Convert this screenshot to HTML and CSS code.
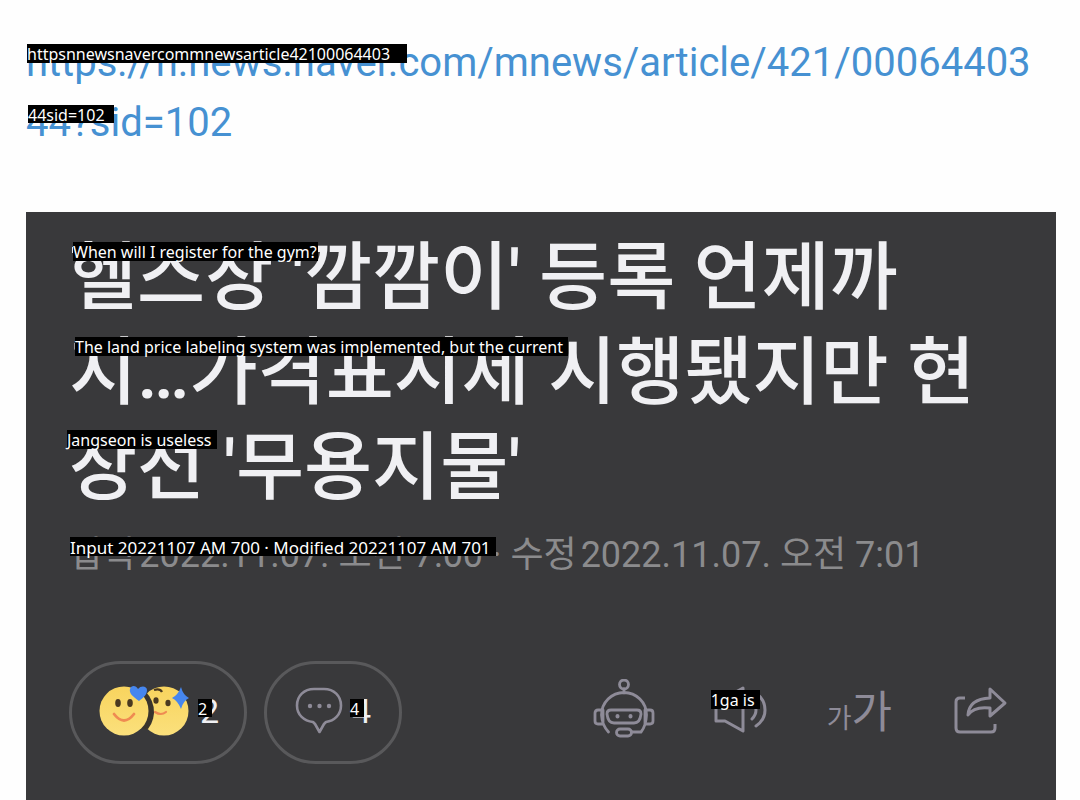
FILE: index.html
```html
<!DOCTYPE html>
<html lang="ko">
<head>
<meta charset="utf-8">
<title>헬스장 '깜깜이' 등록 언제까지</title>
<link rel="stylesheet" href="styles.css">
</head>
<body>
<p class="source">
  <a href="https://n.news.naver.com/mnews/article/421/0006440344?sid=102"><span class="line">https://n.news.naver.com/mnews/article/421/00064403<span class="tag tag-url">httpsnnewsnavercommnewsarticle42100064403</span></span><span class="line">44?sid=102<span class="tag tag-sid">44sid=102</span></span></a>
</p>
<main class="card">
  <h1 class="title">
    <span class="line">헬스장 '깜깜이' 등록 언제까<span class="tag tag-t1">When will I register for the gym?</span></span>
    <span class="line">지…가격표시제 시행됐지만 현<span class="tag tag-t2">The land price labeling system was implemented, but the current</span></span>
    <span class="line">장선 '무용지물'<span class="tag tag-t3">Jangseon is useless</span></span>
  </h1>
  <p class="meta line"><span class="label">입력</span>2022.11.07. 오전 7:00 · <span class="label">수정</span>2022.11.07. 오전 7:01<span class="tag tag-meta">Input 20221107 AM 700 · Modified 20221107 AM 701</span></p>
  <div class="actions">
    <button class="pill" type="button">
      <svg viewBox="0 0 92 52" width="92" height="52" aria-hidden="true">
        <defs><linearGradient id="skin" x1="0" y1="0" x2="0" y2="1"><stop offset="0" stop-color="#f8d45e"/><stop offset="1" stop-color="#fbe07c"/></linearGradient></defs>
        <circle cx="65" cy="26" r="24.5" fill="url(#skin)"/>
        <path d="M55 5q6-2 8 2" fill="none" stroke="#4a3920" stroke-width="2.2"/>
        <ellipse cx="57" cy="15.5" rx="2.6" ry="3.3" fill="#4a3920"/>
        <ellipse cx="69" cy="18" rx="2.6" ry="3.3" fill="#4a3920"/>
        <path d="M56 27q6 4 11 0" fill="none" stroke="#ef8b52" stroke-width="2.2" stroke-linecap="round"/>
        <path d="M82 2q2 8 8 11-6 3-8 11-3-8-9-11 6-3 9-11z" fill="#4686ee"/>
        <path d="M42 3a28 28 0 0 1 7 41L40 43z" fill="#39342c"/>
        <circle cx="25" cy="26" r="24.5" fill="url(#skin)"/>
        <ellipse cx="19" cy="18" rx="2.8" ry="4" fill="#4a3920"/>
        <ellipse cx="31" cy="18" rx="2.8" ry="4" fill="#4a3920"/>
        <path d="M15 29q10 13 20 0" fill="none" stroke="#ef8b52" stroke-width="2.8" stroke-linecap="round"/>
        <path d="M40 16c-7-5-10-8-9-12 1-4 6-4 8 0 3-4 9-3 9 1 0 5-4 8-8 11z" fill="#4686ee"/>
      </svg>
      <span class="count line">2<span class="tag tag-count">2</span></span>
    </button>
    <button class="pill pill-comment" type="button">
      <svg viewBox="0 0 48 48" width="48" height="48" fill="none" stroke="#8e8b98" stroke-width="2.6" stroke-linejoin="round" aria-hidden="true">
        <path d="M19 2h10c10 0 17 7 17 16.500S39 34 31 35l-2 2-4.500 8L20 37l-2-2C9 34 2 28 2 18.500S9 2 19 2z"/>
        <g fill="#8e8b98" stroke="none"><circle cx="15" cy="19" r="2.2"/><circle cx="24.5" cy="19" r="2.2"/><circle cx="34" cy="19" r="2.2"/></g>
      </svg>
      <span class="count line">4<span class="tag tag-count">4</span></span>
    </button>
    <div class="tools">
      <button class="tool" type="button" aria-label="AI">
        <svg viewBox="0 0 62 60" width="62" height="60" fill="none" stroke="#8e8b98" stroke-width="2.8" stroke-linecap="round" stroke-linejoin="round" aria-hidden="true">
          <circle cx="31" cy="5.5" r="4.5"/><path d="M31 10v4M15.500 53Q9 46 8.500 36a22.500 22.500 0 0 1 45 0Q53 47 48 53h-9M8 31H5q-3 0-3 3v8q0 3 3 3h5V31M54 31h3q3 0 3 3v8q0 3-3 3h-5V31"/>
          <path d="M18 31h26q4 0 4 4-1 9-7 9H21q-6 0-7-9 0-4 4-4z"/><rect x="23.5" y="50" width="15" height="7" rx="3.5"/>
          <path d="M24.500 37v.5M37.500 37v.5" stroke-width="4"/>
        </svg>
      </button>
      <button class="tool line" type="button">
        <svg viewBox="0 0 60 48" width="60" height="48" fill="none" stroke="#8e8b98" stroke-width="3" stroke-linecap="round" stroke-linejoin="round" aria-hidden="true">
          <path d="M5 13v23h9l18 10V3L14 13zM41 17q4 3 4 8t-4 9M46 9q8 6 8 16t-9 16"/>
        </svg>
        <span class="tag tag-tool">1ga is</span>
      </button>
      <button class="tool sizes" type="button"><span class="small">가</span><span class="large">가</span></button>
      <button class="tool" type="button" aria-label="공유">
        <svg viewBox="0 0 56 50" width="56" height="50" fill="none" stroke="#8e8b98" stroke-width="3" stroke-linejoin="round" aria-hidden="true">
          <path d="M13 14H8q-4 0-4 4v26q0 4 4 4h31q4 0 4-4v-4"/>
          <path d="M38 5l15 14-15 13v-8q-16-2-22 7 1-16 22-17z"/>
        </svg>
      </button>
    </div>
  </div>
</main>
</body>
</html>
```
FILE: styles.css
```css
* { box-sizing: border-box; }
body {
  margin: 0;
  min-height: 100vh;
  display: flex;
  flex-direction: column;
  background: #fefefe;
  font-family: Roboto, "Noto Sans CJK KR", sans-serif;
}
.source {
  margin: 0;
  padding: 33px 24px 59px 26px;
  font-size: 40px;
  line-height: 60px;
}
.source a { color: #4691d2; text-decoration: none; }
.line { display: block; position: relative; white-space: nowrap; }
.card {
  flex: 1;
  margin: 0 24px 0 26px;
  padding: 18px 48px 36px 43px;
  background: #39393b;
}
.title {
  margin: 0;
  color: #f0f0f3;
  font-size: 74px;
  font-weight: 500;
  line-height: 95px;
}
.meta {
  margin: 14px 0 80px;
  color: #8b8b8d;
  font-size: 36px;
  line-height: 52px;
}
.label { margin-right: 4px; }
.actions { display: flex; align-items: center; gap: 17px; }
button { font-family: inherit; color: inherit; cursor: pointer; }
.pill {
  display: flex;
  align-items: center;
  gap: 9px;
  height: 103px;
  padding: 0 25px 4px 27px;
  border: 3px solid #59595b;
  border-radius: 52px;
  background: none;
}
.pill-comment { padding: 0 28px 4px; }
.count { color: #f0f0f3; font-size: 34px; line-height: 40px; }
.tools {
  flex: 1;
  display: flex;
  justify-content: flex-end;
  align-items: center;
  gap: 56px;
  padding-bottom: 8px;
}
.tool {
  display: flex;
  align-items: center;
  justify-content: center;
  padding: 0;
  border: 0;
  background: none;
  color: #8e8b98;
}
.sizes { align-items: baseline; padding-top: 14px; margin-right: 4px; }
.small { font-size: 27px; line-height: 48px; }
.large { font-size: 44px; line-height: 48px; }
.tag {
  position: absolute;
  padding: 2px 5px 0 0;
  background: #000;
  color: #fff;
  font: 400 16px/17px "Noto Sans", sans-serif;
}
.tag-url { left: 1px; top: 11px; padding-right: 17px; }
.tag-sid { left: 2px; top: 12px; line-height: 16px; padding-right: 9px; }
.tag-t1 { left: 4px; top: 12px; padding-right: 1px; }
.tag-t2 { left: 6px; top: 12px; }
.tag-t3 { left: -2px; top: 10px; }
.tag-meta { left: 1px; top: 8px; font-size: 17px; }
.tag-count { left: -2px; top: 8px; line-height: 16px; }
.tag-tool { left: 0; top: 5px; }
```
